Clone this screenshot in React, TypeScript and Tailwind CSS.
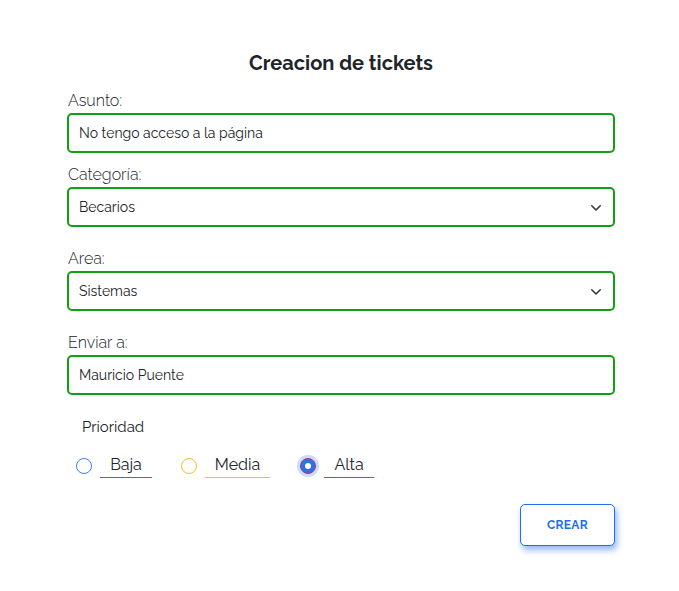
const font = { fontFamily: "Raleway, Lato, 'Noto Sans', sans-serif" };

export default function App() {
  return (
    <main className="min-h-screen bg-white text-[#212529] pt-[50px]" style={font}>
      <div className="w-[548px] ml-[67px]">
        <h1 className="text-center text-[20px] font-bold leading-[26px] mb-[15px]">
          Creacion de tickets
        </h1>

        <Field label="Asunto:" value="No tengo acceso a la página" />
        <Field label="Categoría:" value="Becarios" select className="mt-[12px]" />
        <Field label="Area:" value="Sistemas" select className="mt-[22px]" />
        <Field label="Enviar a:" value="Mauricio Puente" className="mt-[22px]" />

        <p className="text-[15px] ml-[15px] mt-[22px] leading-[20px]">Prioridad</p>

        <div className="flex items-center mt-[16px] ml-[9px]">
          <Radio label="Baja" ring="border-[#3b82f6]" line="border-[#2f6fe8]" w="w-[52px]" />
          <Radio label="Media" ring="border-[#f5c02a]" line="border-[#f5c02a]" w="w-[65px]" className="ml-[29px]" />
          <Radio label="Alta" checked ring="border-[#2f6fe8]" line="border-[#dc3545]" w="w-[50px]" className="ml-[30px]" />
        </div>

        <div className="flex justify-end mt-[26px]">
          <button className="w-[95px] h-[42px] rounded-[5px] border border-[#1f6feb] bg-white text-[#1f6feb] text-[12px] font-bold tracking-wide shadow-[2px_4px_6px_rgba(31,111,235,0.5)]">
            CREAR
          </button>
        </div>
      </div>
    </main>
  );
}

function Field({
  label,
  value,
  select,
  className = "",
}: {
  label: string;
  value: string;
  select?: boolean;
  className?: string;
}) {
  return (
    <div className={className}>
      <p className="text-[16px] font-light leading-[20px] mb-[2px] ml-[1px]">{label}</p>
      <div className="h-[40px] border-2 border-[#11a011] rounded-[5px] flex items-center justify-between pl-[10px] pr-[11px]">
        <span className="text-[14px]">{value}</span>
        {select && (
          <svg width="12" height="8" viewBox="0 0 12 8" fill="none" className="mt-[1px]">
            <path d="M1.75 1.75 6 6l4.25-4.25" stroke="#343a40" strokeWidth="1.6" strokeLinecap="round" strokeLinejoin="round" />
          </svg>
        )}
      </div>
    </div>
  );
}

function Radio({
  label,
  checked,
  ring,
  line,
  w,
  className = "",
}: {
  label: string;
  checked?: boolean;
  ring: string;
  line: string;
  w: string;
  className?: string;
}) {
  return (
    <div className={`flex items-center ${className}`}>
      {checked ? (
        <span className="w-[16px] h-[16px] rounded-full bg-[#2f6fe8] border border-[#9b3a7a] flex items-center justify-center shadow-[0_0_0_3px_rgba(47,111,232,0.25)]">
          <span className="w-[6px] h-[6px] rounded-full bg-white" />
        </span>
      ) : (
        <span className={`w-[16px] h-[16px] rounded-full border ${ring}`} />
      )}
      <span className={`ml-[8px] ${w} text-center text-[16px] leading-[24px] border-b ${line}`}>
        {label}
      </span>
    </div>
  );
}
